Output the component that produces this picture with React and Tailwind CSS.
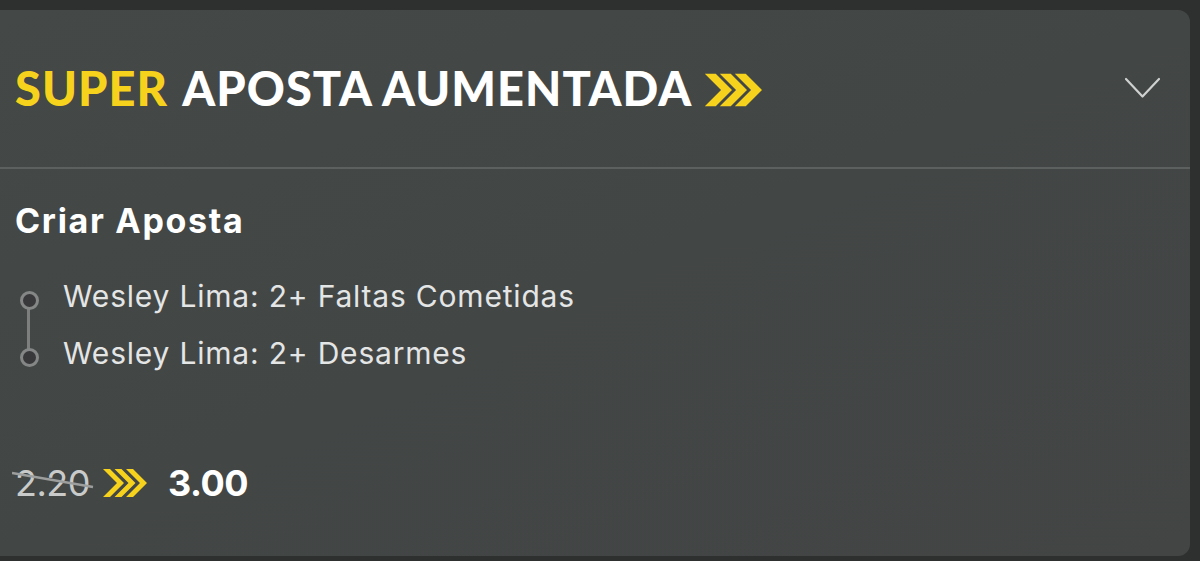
import React from 'react';

const legs = [
  'Wesley Lima: 2+ Faltas Cometidas',
  'Wesley Lima: 2+ Desarmes',
];

function BoostChevrons({ className, size = 'lg' }) {
  if (size === 'lg') {
    // three chunky chevrons in the header
    const pts = (x) =>
      `${x},0 ${x + 13},0 ${x + 30},17 ${x + 13},34 ${x},34 ${x + 17},17`;
    return (
      <svg className={className} width="61" height="34" viewBox="0 0 61 34">
        {[0, 15, 30].map((x) => (
          <polygon key={x} points={pts(x)} fill="#f6d21c" stroke="#434746" strokeWidth="1.5" strokeLinejoin="miter" />
        ))}
      </svg>
    );
  }
  const pts = (x) =>
    `${x},0 ${x + 7},0 ${x + 21},14 ${x + 7},28 ${x},28 ${x + 14},14`;
  return (
    <svg className={className} width="44" height="28" viewBox="0 0 44 28">
      {[0, 11.5, 23].map((x) => (
        <polygon key={x} points={pts(x)} fill="#f6d21c" />
      ))}
    </svg>
  );
}

export default function App() {
  const [open, setOpen] = React.useState(true);

  return (
    <div
      className="h-[561px] w-[1200px] overflow-hidden bg-[#2e2f2f] pt-[10px] pr-[10px] pb-[5px]"
      style={{ fontFamily: 'Inter, "Noto Sans", sans-serif' }}
    >
      <div className="h-full rounded-r-[12px] bg-gradient-to-br from-[#444847] via-[#424645] to-[#434545]">
        <div className="flex h-[157px] items-center justify-between pl-[15px] pr-[30px]">
          <h1
            className="flex items-center text-[47px] font-black leading-none tracking-[1.05px]"
            style={{ fontFamily: 'Lato, "Liberation Sans", sans-serif' }}
          >
            <span className="text-[#f6d21c]">SUPER</span>
            <span className="ml-[14px] text-white">APOSTA AUMENTADA</span>
            <BoostChevrons className="ml-[11px] mt-[2px]" />
          </h1>
          <button type="button" onClick={() => setOpen(!open)} className="mt-[-2px]">
            <svg width="35" height="22" viewBox="0 0 35 22" fill="none">
              <path d="M1 2 L17.5 19.5 L34 2" stroke="#cfd0d0" strokeWidth="2.2" strokeLinecap="round" strokeLinejoin="round" />
            </svg>
          </button>
        </div>
        <div className="h-[2px] bg-[#5c605f]" />

        {open && (
          <div className="pl-[15px] pt-[36px]">
            <h2 className="text-[34px] font-bold leading-[32px] tracking-[1.7px] text-white">Criar Aposta</h2>

            <ul className="relative mt-[30px]">
              <span className="absolute left-[12px] top-[31px] h-[57px] w-[3px] bg-[#7c7f7e]" />
              {legs.map((leg) => (
                <li key={leg} className="flex h-[57px] items-center">
                  <span className="flex w-[48px] pl-[5px] pt-[9px]">
                    <span className="relative z-10 h-[19px] w-[19px] rounded-full border-[3px] border-[#848786] bg-[#39393b]" />
                  </span>
                  <span className="text-[30px] leading-none tracking-[0.8px] text-[#e4e5e5]">{leg}</span>
                </li>
              ))}
            </ul>

            <div className="mt-[84px] flex items-center">
              <span className="relative text-[36px] leading-none tracking-[-0.5px] text-[#c9cbca]">
                2.20
                <svg className="absolute left-[-3px] top-[6px]" width="82" height="20" viewBox="0 0 82 20">
                  <line x1="0" y1="2" x2="81" y2="16" stroke="#9c9e9d" strokeWidth="2.5" />
                </svg>
              </span>
              <BoostChevrons size="sm" className="ml-[13px]" />
              <span className="ml-[21px] text-[36px] font-bold leading-none tracking-[-0.5px] text-white">3.00</span>
            </div>
          </div>
        )}
      </div>
    </div>
  );
}
